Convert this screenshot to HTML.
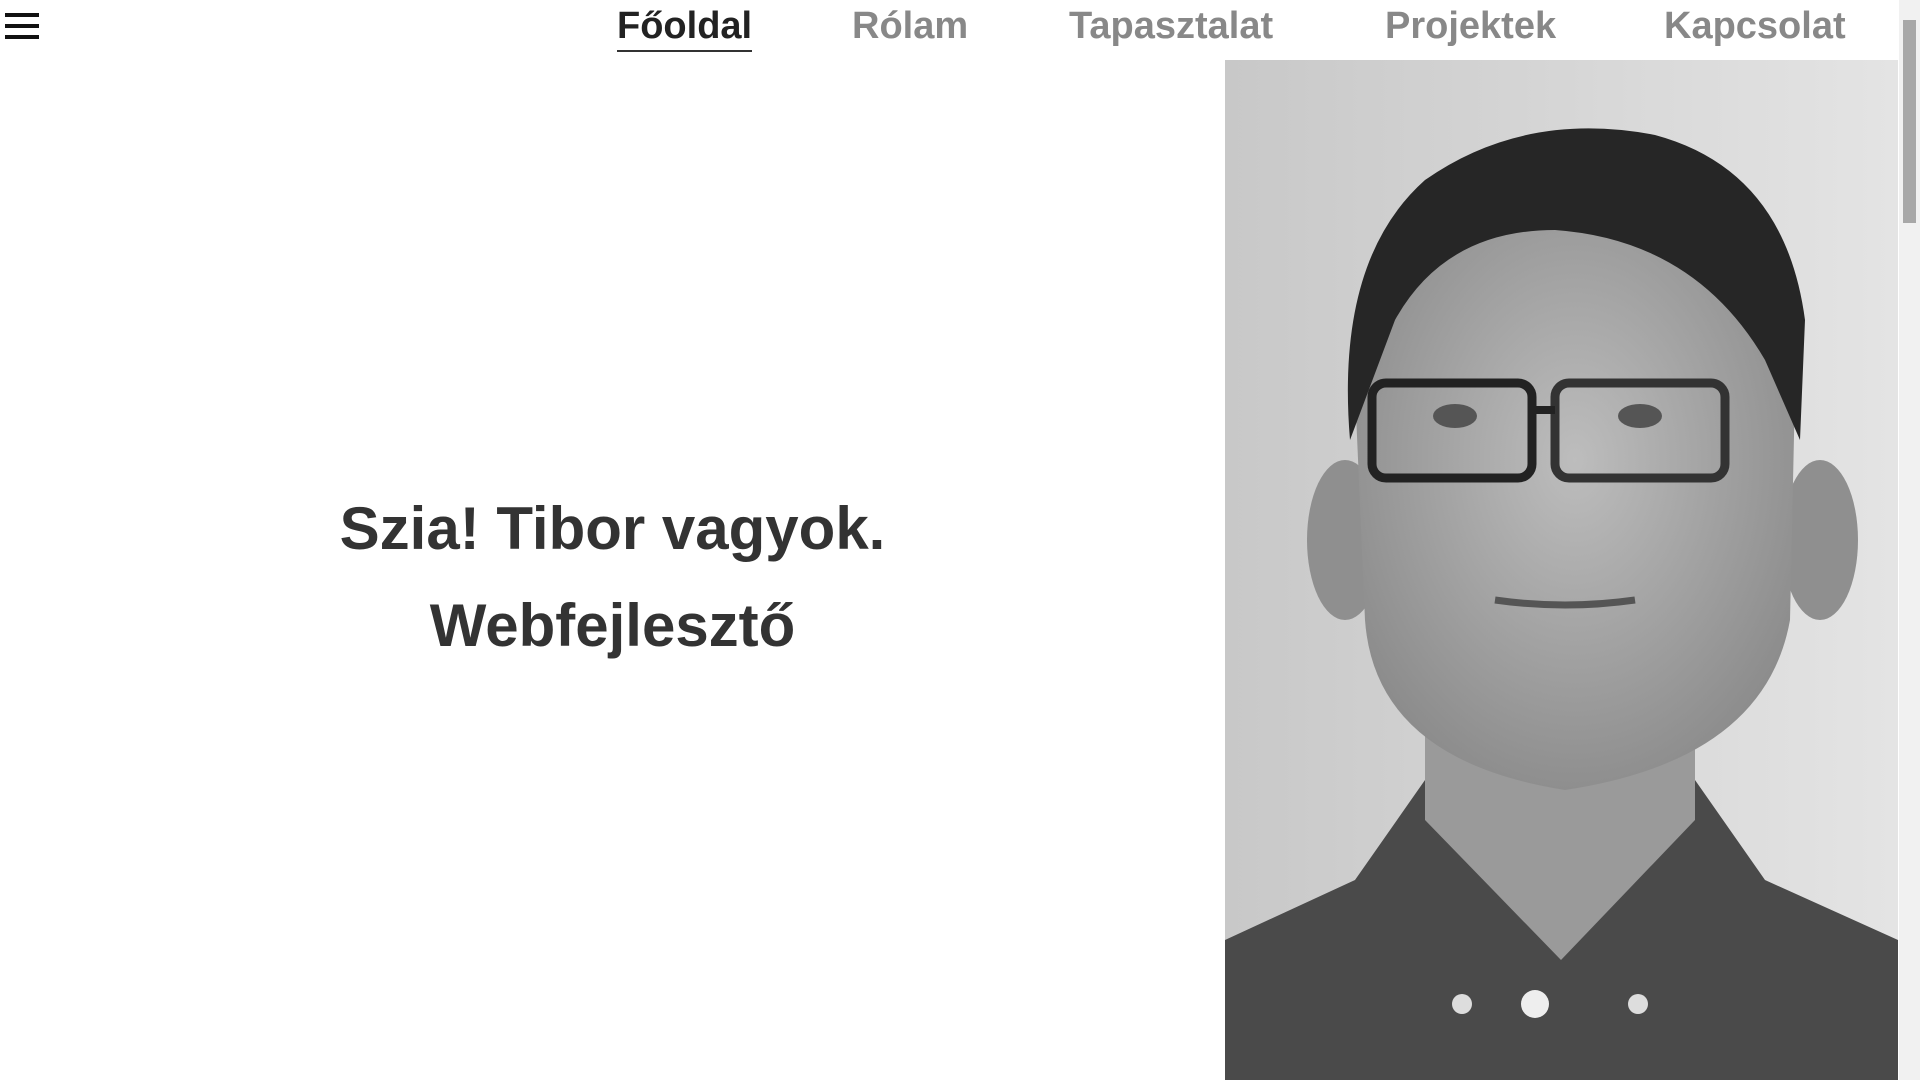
<!DOCTYPE html>
<html><head><meta charset="utf-8"><style>
html,body{margin:0;padding:0;width:1920px;height:1080px;overflow:hidden;background:#fff;font-family:"Liberation Sans",sans-serif}
.hb{position:absolute;left:5px;top:13px;width:34px}
.hb div{height:4px;background:#111;margin-bottom:7px}
.nav a{position:absolute;top:5px;font-size:38px;font-weight:bold;color:#888;text-decoration:none;white-space:nowrap}
.nav a.act{color:#222;border-bottom:2px solid #333;padding-bottom:2px}
h1{position:absolute;left:0;width:1225px;text-align:center;margin:0;font-size:60px;font-weight:bold;color:#333}
.photo{position:absolute;left:1225px;top:60px;width:673px;height:1020px;overflow:hidden}
.sb{position:absolute;left:1899px;top:0;width:21px;height:1080px;background:#f1f1f1}
.sb div{position:absolute;left:4px;top:20px;width:13px;height:203px;background:#a8a8a8}
</style></head><body>
<div class="hb"><div></div><div></div><div></div></div>
<div class="nav">
<a class="act" style="left:617px">Főoldal</a>
<a style="left:852px">Rólam</a>
<a style="left:1069px">Tapasztalat</a>
<a style="left:1385px">Projektek</a>
<a style="left:1664px">Kapcsolat</a>
</div>
<h1 style="top:494px">Szia! Tibor vagyok.</h1>
<h1 style="top:591px">Webfejlesztő</h1>
<div class="photo">
<svg width="673" height="1020" viewBox="0 0 673 1020">
<defs><linearGradient id="bg" x1="0" x2="1"><stop offset="0" stop-color="#c8c8c8"/><stop offset="1" stop-color="#e4e4e4"/></linearGradient>
<radialGradient id="fc" cx="0.5" cy="0.45" r="0.6"><stop offset="0" stop-color="#bdbdbd"/><stop offset="1" stop-color="#8a8a8a"/></radialGradient></defs>
<rect width="673" height="1020" fill="url(#bg)"/>
<path d="M0 1020 L0 880 L130 820 L200 720 L470 720 L540 820 L673 880 L673 1020 Z" fill="#4a4a4a"/>
<path d="M200 560 L200 760 L336 900 L470 760 L470 560 Z" fill="#9a9a9a"/>
<ellipse cx="120" cy="480" rx="38" ry="80" fill="#8f8f8f"/>
<ellipse cx="595" cy="480" rx="38" ry="80" fill="#8f8f8f"/>
<path d="M130 330 Q130 140 340 130 Q560 140 570 330 L565 560 Q540 700 340 730 Q150 700 140 560 Z" fill="url(#fc)"/>
<path d="M125 380 Q110 200 200 120 Q300 50 430 75 Q560 110 580 260 L575 380 L540 300 Q470 180 330 170 Q220 170 170 260 Z" fill="#262626"/>
<rect x="147" y="323" width="160" height="95" rx="14" fill="none" stroke="#222" stroke-width="9"/>
<rect x="330" y="323" width="170" height="95" rx="14" fill="none" stroke="#333" stroke-width="9"/>
<path d="M307 350 L330 350" stroke="#222" stroke-width="8"/>
<ellipse cx="230" cy="356" rx="22" ry="12" fill="#555"/>
<ellipse cx="415" cy="356" rx="22" ry="12" fill="#555"/>
<path d="M270 540 Q340 550 410 540" stroke="#555" stroke-width="7" fill="none"/>
<circle cx="237" cy="944" r="10" fill="#ddd"/><circle cx="310" cy="944" r="14" fill="#eee"/><circle cx="413" cy="944" r="10" fill="#ddd"/>
</svg>
</div>
<div class="sb"><div></div></div>
</body></html>
